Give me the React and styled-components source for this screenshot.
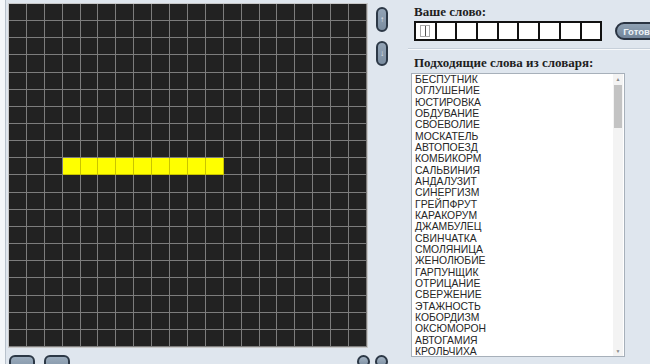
import React from "react";
import styled, { createGlobalStyle } from "styled-components";

const Global = createGlobalStyle`
  html, body { margin: 0; padding: 0; }
  body {
    background: #dfe6ee;
    width: 650px; height: 364px; overflow: hidden;
    font-family: "Liberation Sans", Arial, sans-serif;
  }
`;

const Page = styled.div`
  display: flex;
  width: 650px;
  height: 364px;
  overflow: hidden;
  border-left: 5px solid #f4f7fa;
  box-sizing: border-box;
`;

const EdgeLine = styled.div`
  width: 1px;
  background: #b9c2cc;
  flex: none;
`;

const LeftArea = styled.div`
  display: grid;
  grid-template-columns: 360px 12px;
  grid-template-rows: 345px auto;
  column-gap: 8px;
  row-gap: 7px;
  padding: 3px 0 0 2px;
  flex: none;
`;

const Board = styled.div`
  display: grid;
  grid-template-columns: repeat(20, 1fr);
  grid-template-rows: repeat(20, 1fr);
  background: #222222;
  border: 1px solid #c8c8c8;
  box-sizing: border-box;
  width: 360px;
  height: 345px;
`;

const Cell = styled.div`
  background: ${(p) => (p.$on ? "#ffff00" : "#222222")};
  border-right: 1px solid ${(p) => (p.$on ? "#c9c400" : "#7d7d7d")};
  border-bottom: 1px solid ${(p) => (p.$on ? "#c9c400" : "#7d7d7d")};
  box-sizing: border-box;
`;

const SideButtons = styled.div`
  display: flex;
  flex-direction: column;
  gap: 9px;
  padding-top: 4px;
`;

const PillButton = styled.div`
  width: 12px;
  height: 25px;
  box-sizing: border-box;
  border: 2px solid #2c3846;
  border-radius: 7px;
  background: linear-gradient(#93a4b6, #7b8da0);
  color: #e6edf3;
  font-size: 8px;
  display: flex;
  align-items: center;
  justify-content: center;
  line-height: 1;
`;

const BottomBar = styled.div`
  grid-column: 1 / span 2;
  display: flex;
  align-items: flex-start;
  padding-left: 1px;
`;

const RectButton = styled.div`
  width: 26px;
  height: 20px;
  box-sizing: border-box;
  border: 2px solid #2c3846;
  border-radius: 6px;
  background: linear-gradient(#9aabbc, #7b8da0);
  margin-right: 9px;
`;

const Spacer = styled.div`
  flex: 1;
`;

const RoundButton = styled.div`
  width: 13px;
  height: 13px;
  box-sizing: border-box;
  border: 2px solid #2c3846;
  border-radius: 50%;
  background: linear-gradient(#a3b3c3, #7b8da0);
  margin-left: 5px;
`;

const RightPanel = styled.div`
  flex: 1;
  margin-left: 23px;
  padding-top: 5px;
  display: flex;
  flex-direction: column;
`;

const Heading = styled.div`
  font-family: "Liberation Serif", "Times New Roman", serif;
  font-weight: bold;
  font-size: 13px;
  line-height: 13px;
  color: #1e1e1e;
  padding-left: 3px;
`;

const WordRow = styled.div`
  display: flex;
  align-items: center;
  margin-top: 3px;
  padding-left: 3px;
`;

const Boxes = styled.div`
  display: flex;
  gap: 2px;
  padding: 2px;
  background: #111;
`;

const LetterBox = styled.div`
  width: 18.7px;
  height: 16px;
  background: #ffffff;
  display: flex;
  align-items: center;
  justify-content: center;
`;

const Caret = styled.div`
  width: 10px;
  height: 12px;
  border: 1px solid #a9a9a9;
  box-sizing: border-box;
  display: flex;
  justify-content: center;
  &::after {
    content: "";
    width: 1px;
    height: 100%;
    background: #555;
  }
`;

const DoneButton = styled.div`
  margin-left: 13px;
  height: 18px;
  padding: 0 14px 0 6px;
  box-sizing: border-box;
  border: 2px solid #2a3442;
  border-radius: 9px;
  background: linear-gradient(#8fa1b3, #72859a);
  color: #eef3f7;
  font-size: 9.5px;
  font-weight: bold;
  display: flex;
  align-items: center;
  white-space: nowrap;
`;

const Separator = styled.div`
  margin-top: 7px;
  margin-left: -3px;
  height: 1px;
  background: #c7d0da;
  border-bottom: 1px solid #f7f9fb;
`;

const ListHeading = styled(Heading)`
  margin-top: 6px;
`;

const ListBox = styled.div`
  margin-top: 4px;
  width: 214px;
  height: 284px;
  box-sizing: border-box;
  background: #ffffff;
  border: 1px solid #a7b0ba;
  display: flex;
  overflow: hidden;
`;

const Items = styled.div`
  flex: 1;
  padding: 0 0 0 3px;
`;

const Item = styled.div`
  font-family: "Liberation Sans", Arial, sans-serif;
  font-size: 10.4px;
  line-height: 11.33px;
  color: #262626;
  white-space: nowrap;
`;

const ScrollBar = styled.div`
  width: 10px;
  display: flex;
  flex-direction: column;
  align-items: center;
  background: #f3f3f3;
  margin-right: 1px;
`;

const Arrow = styled.div`
  height: 10px;
  font-size: 5px;
  color: #8a8a8a;
  display: flex;
  align-items: center;
  justify-content: center;
`;

const Track = styled.div`
  flex: 1;
  width: 100%;
  display: flex;
  justify-content: center;
`;

const Thumb = styled.div`
  width: 8px;
  height: 43px;
  margin-top: 1px;
  background: #c3c3c3;
`;

const words = [
  "БЕСПУТНИК", "ОГЛУШЕНИЕ", "ЮСТИРОВКА", "ОБДУВАНИЕ", "СВОЕВОЛИЕ",
  "МОСКАТЕЛЬ", "АВТОПОЕЗД", "КОМБИКОРМ", "САЛЬВИНИЯ", "АНДАЛУЗИТ",
  "СИНЕРГИЗМ", "ГРЕЙПФРУТ", "КАРАКОРУМ", "ДЖАМБУЛЕЦ", "СВИНЧАТКА",
  "СМОЛЯНИЦА", "ЖЕНОЛЮБИЕ", "ГАРПУНЩИК", "ОТРИЦАНИЕ", "СВЕРЖЕНИЕ",
  "ЭТАЖНОСТЬ", "КОБОРДИЗМ", "ОКСЮМОРОН", "АВТОГАМИЯ", "КРОЛЬЧИХА",
];

export default function App() {
  const cells = [];
  for (let r = 0; r < 20; r++) {
    for (let c = 0; c < 20; c++) {
      const on = r === 9 && c >= 3 && c <= 11;
      cells.push(<Cell key={`${r}-${c}`} $on={on} />);
    }
  }
  return (
    <>
      <Global />
      <Page>
        <EdgeLine />
        <LeftArea>
          <Board>{cells}</Board>
          <SideButtons>
            <PillButton>↑</PillButton>
            <PillButton>↓</PillButton>
          </SideButtons>
          <BottomBar>
            <RectButton />
            <RectButton />
            <Spacer />
            <RoundButton />
            <RoundButton />
          </BottomBar>
        </LeftArea>
        <RightPanel>
          <Heading>Ваше слово:</Heading>
          <WordRow>
            <Boxes>
              {Array.from({ length: 9 }).map((_, i) => (
                <LetterBox key={i}>{i === 0 && <Caret />}</LetterBox>
              ))}
            </Boxes>
            <DoneButton>Готово</DoneButton>
          </WordRow>
          <Separator />
          <ListHeading>Подходящие слова из словаря:</ListHeading>
          <ListBox>
            <Items>
              {words.map((w) => (
                <Item key={w}>{w}</Item>
              ))}
            </Items>
            <ScrollBar>
              <Arrow>▲</Arrow>
              <Track>
                <Thumb />
              </Track>
              <Arrow>▼</Arrow>
            </ScrollBar>
          </ListBox>
        </RightPanel>
      </Page>
    </>
  );
}
